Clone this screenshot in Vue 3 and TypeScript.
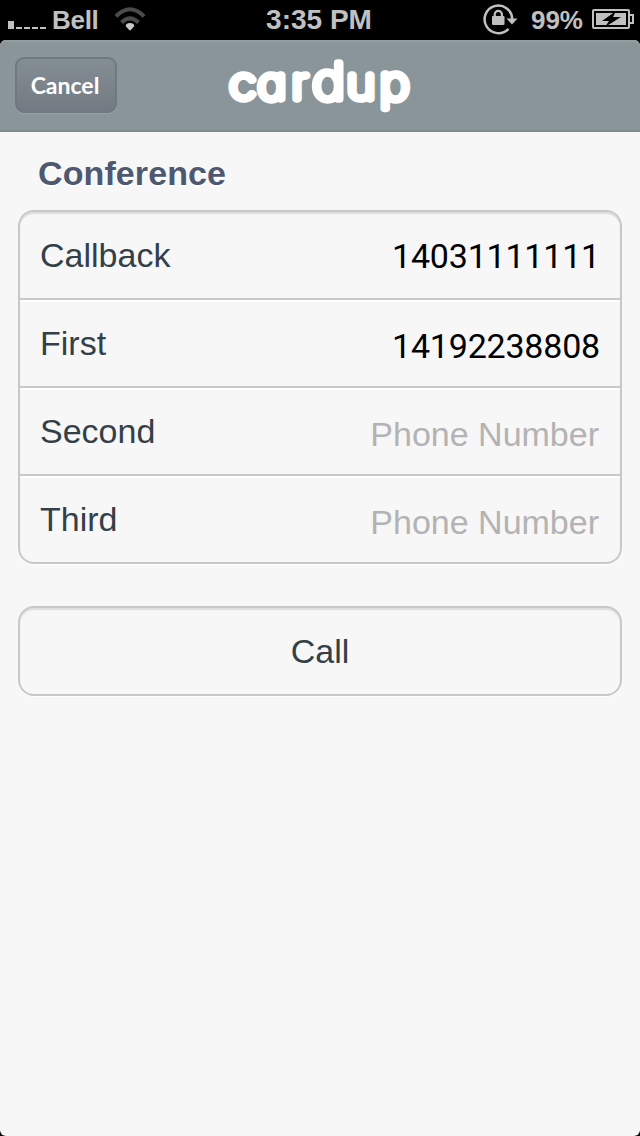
<script setup lang="ts">
import { ref } from 'vue'

interface Field {
  label: string
  value: string
}

const fields = ref<Field[]>([
  { label: 'Callback', value: '14031111111' },
  { label: 'First', value: '14192238808' },
  { label: 'Second', value: '' },
  { label: 'Third', value: '' },
])
</script>

<template>
  <div class="screen">
    <header class="status">
      <div class="status-left">
        <svg class="signal" width="38" height="9" viewBox="0 0 38 9">
          <path d="M0 1h6v8H0zM8 7h6v2H8zM16 7h6v2h-6zM24 7h6v2h-6zM32 7h6v2h-6z" fill="#c0c0c0" />
        </svg>
        <span class="carrier">Bell</span>
        <svg class="wifi" width="32" height="24" viewBox="0 0 32 24">
          <g fill="none" stroke="#4b4b4b" stroke-width="4">
            <path d="M2 9.3Q16-4.8 30 9.3" />
            <path d="M7.500 15.500Q16 7.200 24.500 15.500" />
          </g>
          <path d="M16 23.800l-4.300-4.600q.3-3.200 4.300-3.200t4.300 3.200z" fill="#c8c8c8" />
        </svg>
      </div>
      <span class="clock">3:35 PM</span>
      <div class="status-right">
        <svg class="lock" width="36" height="32" viewBox="0 0 36 32">
          <path d="M25.500 25.800A13.800 13.800 0 1 1 29.200 16" fill="none" stroke="#c0c0c0" stroke-width="2.500" />
          <path d="M23.500 15.500h11l-5.500 6z" fill="#c0c0c0" />
          <rect x="9" y="13" width="12.500" height="9" rx="1" fill="#c0c0c0" />
          <path d="M11.700 14v-2.500a3.600 3.600 0 0 1 7.200 0V14" fill="none" stroke="#c0c0c0" stroke-width="2.200" />
        </svg>
        <span class="percent">99%</span>
        <svg class="battery" width="42" height="20" viewBox="0 0 42 20">
          <rect x="1" y="1" width="36" height="18" rx="1" fill="none" stroke="#c0c0c0" stroke-width="2" />
          <path d="M38 6h3v8h-3" fill="none" stroke="#c0c0c0" stroke-width="2" />
          <rect x="4" y="4" width="30" height="12" fill="#c0c0c0" />
          <path d="M24 2L10 12h7l-4 6 16-10h-8z" fill="#000" />
        </svg>
      </div>
    </header>

    <main class="app">
      <nav class="bar">
        <button class="cancel" type="button">Cancel</button>
        <svg class="logo" width="200" height="80" viewBox="0 0 200 80">
          <text transform="scale(1.13 1)" x="8.400 33.400 63.500 81.800 112.200 141.300" y="57.500">car<tspan class="ascending">d</tspan>u<tspan class="descending">p</tspan></text>
        </svg>
      </nav>

      <h1 class="title">Conference</h1>

      <section class="group">
        <label v-for="field in fields" :key="field.label" class="row">
          <span class="name">{{ field.label }}</span>
          <span class="value" :class="{ empty: !field.value }">{{ field.value || 'Phone Number' }}</span>
        </label>
      </section>

      <button class="group call" type="button">Call</button>
    </main>
  </div>
</template>

<style>
body {
  margin: 0;
  background: #000;
}
</style>

<style scoped>
.screen {
  width: 640px;
  height: 1136px;
  display: flex;
  flex-direction: column;
  overflow: hidden;
  background: #000;
  font-family: "Liberation Sans", Arial, sans-serif;
  font-kerning: none;
}
.status {
  height: 40px;
  display: grid;
  grid-template-columns: 1fr auto 1fr;
  color: #c0c0c0;
  font-size: 26px;
  line-height: 40px;
  font-weight: bold;
}
.status-left,
.status-right {
  display: flex;
}
.status-right {
  justify-content: flex-end;
}
.signal {
  margin: 20px 6px 0 8px;
}
.carrier {
  letter-spacing: -0.3px;
}
.wifi {
  margin: 7px 0 0 16px;
}
.clock {
  margin-right: 2px;
  font-size: 28px;
  line-height: 39px;
}
.lock {
  margin: 3px 12px 0 0;
}
.battery {
  margin: 9px 6px 0 9px;
}
.app {
  flex: 1;
  display: flex;
  flex-direction: column;
  overflow: hidden;
  border-radius: 6px;
  background: #f7f7f7;
}
.bar {
  height: 92px;
  flex: none;
  box-sizing: border-box;
  display: flex;
  align-items: flex-start;
  padding-left: 15px;
  background: #8a959a;
  border-bottom: 2px solid #7d898f;
  box-shadow: inset 0 2px #929da2;
}
.cancel {
  width: 102px;
  height: 56px;
  margin: 17px 103px 0 0;
  padding: 0 2px 0 0;
  border: 2px solid #6f7a80;
  border-radius: 9px;
  background: linear-gradient(#838e93, #747a83);
  box-shadow: 0 1px #97a1a6;
  color: #fff;
  font: bold 23px Lato, sans-serif;
  text-align: center;
}
.logo {
  margin-top: 2px;
}
.logo text {
  font-family: Inter, sans-serif;
  font-size: 43px;
  font-weight: 100;
  font-feature-settings: "cv11";
  fill: #fff;
  stroke: #fff;
  stroke-width: 7.4px;
  stroke-linejoin: round;
}
.logo .ascending {
  font-size: 49px;
}
.logo .descending {
  font-size: 45px;
}
.title {
  margin: 22px 0 18px 38px;
  color: #4e5871;
  font-size: 34px;
  line-height: 38px;
  letter-spacing: 0.1px;
  text-shadow: 0 2px #fff;
}
.group {
  box-sizing: border-box;
  margin: 0 18px;
  border: 2px solid #c8c8c8;
  border-radius: 16px;
  background: #f7f7f7;
  box-shadow: inset 0 2px 1px #dedede, 0 1px #fff;
  color: #334047;
  font-size: 34px;
}
.row {
  height: 88px;
  box-sizing: border-box;
  display: flex;
  justify-content: space-between;
  padding: 0 20px;
  line-height: 86px;
  border-top: 2px solid #c8c8c8;
  box-shadow: inset 0 2px #fff;
}
.row:first-child {
  height: 86px;
  border-top: 0;
  box-shadow: none;
}
.value {
  color: #000;
  font-family: Roboto, "Liberation Sans", sans-serif;
  letter-spacing: -0.2px;
  line-height: 93px;
}
.row:first-child .value {
  line-height: 88px;
}
.value.empty {
  margin-right: 1px;
  color: #b3b3b3;
  font-family: inherit;
  letter-spacing: 0;
  line-height: 92px;
}
.call {
  height: 90px;
  margin-top: 42px;
  padding: 0;
  font-family: inherit;
}
</style>
